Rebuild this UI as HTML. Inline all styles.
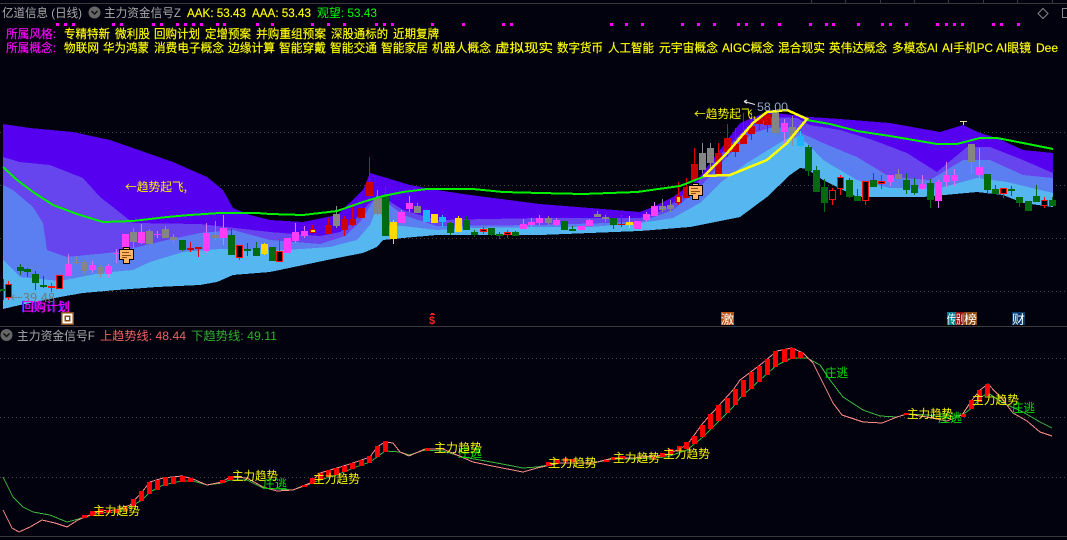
<!DOCTYPE html>
<html><head><meta charset="utf-8"><style>
html,body{margin:0;padding:0;background:#02020e;width:1067px;height:540px;overflow:hidden}
svg{display:block}
text{font-family:"Liberation Sans","Noto Sans CJK SC",sans-serif;font-size:12px}
.y{fill:#ffff00;stroke:#ffff00;stroke-width:.15}.m{fill:#ff00ff;stroke:#ff00ff;stroke-width:.15}.g{fill:#aaaaaa}.zl{fill:#f5f500}.zt{fill:#00e000}
.cj{font-family:"Noto Sans CJK SC",sans-serif}
</style></head><body>
<svg width="1067" height="540" viewBox="0 0 1067 540" xmlns="http://www.w3.org/2000/svg">
<rect width="1067" height="540" fill="#02020e"/>
<path d="M0 3.5H1067M0 326.5H1067M0 536.5H1067" stroke="#3a3a3a" fill="none"/>
<path d="M811.5 0V3M845.5 0V3M880.5 0V3M914.5 0V3M948.5 0V3M983.5 0V3M1017.5 0V3M1052.5 0V3" stroke="#3a3a3a"/>
<path d="M0 132.5H1067M0 185.5H1067M0 238.5H1067M0 291.5H1067M0 358.5H1067M0 417.5H1067M0 477.5H1067" stroke="#444" stroke-dasharray="1 3" fill="none"/>

<!-- bands -->
<g shape-rendering="crispEdges">
<polygon fill="#5500ee" points="3,124 30,128 73,132 110,140 133,148 173,162 207,177 223,190 233,208 250,215 270,220 303,222 337,215 363,190 370,173 387,178 410,185 437,190 470,195 540,204 590,208 640,212 653,207 673,197 697,180 720,150 740,123 767,112 810,117 840,119 890,123 940,132 963,125 980,133 997,138 1023,150 1053,153 1053,207 1023,203 1003,195 977,192 923,197 857,197 823,180 807,169 800,168 790,175 767,197 740,217 690,227 640,231 590,233 540,235 437,235 403,238 383,240 377,247 363,253 337,258 270,272 233,275 217,282 200,285 157,287 117,290 83,293 60,297 20,305 3,309"/>
<polygon fill="#6644ee" points="3,157 20,162 50,165 83,178 100,197 113,207 133,223 200,224 270,232 320,236 340,232 353,222 370,202 383,197 403,210 437,220 540,218 640,218 657,213 673,203 697,183 727,147 747,127 773,117 797,118 810,125 840,130 873,140 907,153 937,172 967,147 990,147 1023,160 1053,173 1053,207 1023,203 1003,195 977,192 923,197 857,197 823,180 807,169 800,168 790,175 767,197 740,217 690,227 640,231 590,233 540,235 437,235 403,238 383,240 377,247 363,253 337,258 270,272 233,275 217,282 200,285 157,287 117,290 83,293 60,297 20,305 3,309"/>
<polygon fill="#5b7ff0" points="3,185 13,190 33,207 43,223 47,250 67,257 117,252 167,240 200,233 233,230 270,240 320,244 345,236 360,222 377,195 390,205 403,215 437,226 540,225 640,222 673,210 700,187 727,157 753,133 773,127 790,128 810,137 823,143 857,157 890,177 930,180 963,160 990,160 1023,175 1053,178 1053,207 1023,203 1003,195 977,192 923,197 857,197 823,180 807,169 800,168 790,175 767,197 740,217 690,227 640,231 590,233 540,235 437,235 403,238 383,240 377,247 363,253 337,258 270,272 233,275 217,282 200,285 157,287 117,290 83,293 60,297 20,305 3,309"/>
<polygon fill="#55b6f0" points="3,260 20,277 60,281 100,273 133,270 150,262 183,252 220,249 270,250 287,250 330,247 357,240 370,225 378,205 385,225 403,226 437,230 470,228 540,227 590,227 640,223 673,218 700,203 720,183 747,163 773,147 793,135 807,143 823,160 857,180 890,188 940,188 977,178 1007,182 1053,193 1053,207 1023,203 1003,195 977,192 923,197 857,197 823,180 807,169 800,168 790,175 767,197 740,217 690,227 640,231 590,233 540,235 437,235 403,238 383,240 377,247 363,253 337,258 270,272 233,275 217,282 200,285 157,287 117,290 83,293 60,297 20,305 3,309"/>
</g>

<g shape-rendering="crispEdges">
<!-- magenta -->
<path fill="none" stroke="#d878f0" d="M68.5 254V276M92.5 261V273M108.5 264V278M116.5 249V263M125.5 234V250M141.5 224V244M157.5 231V238M206.5 223V253M223.5 215V245M287.5 238V255M295.5 223V243M304.5 226V238M401.5 210V223M409.5 196V212M523.5 219V235M531.5 218V230M539.5 215V225M556.5 218V226M581.5 226V230M589.5 219V226M637.5 221V229M646.5 212V222M654.5 202V216M784.5 119V143M890.5 175V186M922.5 175V190M938.5 180V208M946.5 162V187M954.5 169V186M979.5 148V186"/>
<path fill="#ff3cf8" d="M65 264h7V276h-7zM89 265h7V270h-7zM105 266h7V274h-7zM113 253h7V254h-7zM122 234h7V247h-7zM138 232h7V243h-7zM154 234h7V235h-7zM203 233h7V251h-7zM220 228h7V238h-7zM284 238h7V253h-7zM292 232h7V241h-7zM301 231h7V236h-7zM398 212h7V223h-7zM406 203h7V209h-7zM520 224h7V229h-7zM528 222h7V225h-7zM536 218h7V223h-7zM553 220h7V225h-7zM578 226h7V230h-7zM586 220h7V226h-7zM634 221h7V229h-7zM643 214h7V220h-7zM651 206h7V216h-7zM781 123h7V132h-7zM887 175h7V182h-7zM919 184h7V189h-7zM935 182h7V201h-7zM943 175h7V182h-7zM951 175h7V181h-7zM976 167h7V175h-7z"/>
<!-- gray -->
<path fill="none" stroke="#8e8e8e" d="M76.5 257V264M84.5 260V274M100.5 265V277M133.5 228V248M149.5 229V244M165.5 226V238M173.5 234V244M215.5 221V240M336.5 206V228M377.5 190V216M417.5 203V213M548.5 216V225M597.5 211V217M605.5 215V222M662.5 199V212M670.5 200V212M702.5 143V173M710.5 143V168M775.5 108V133M792.5 116V146M898.5 169V179M971.5 144V174"/>
<path fill="#858585" d="M73 262h7V263h-7zM81 262h7V271h-7zM97 267h7V274h-7zM130 232h7V242h-7zM146 231h7V244h-7zM162 229h7V238h-7zM170 237h7V240h-7zM212 235h7V238h-7zM333 214h7V226h-7zM374 198h7V214h-7zM414 206h7V213h-7zM545 218h7V223h-7zM594 214h7V217h-7zM602 217h7V219h-7zM659 206h7V210h-7zM667 205h7V209h-7zM699 153h7V170h-7zM707 148h7V163h-7zM772 112h7V133h-7zM789 127h7V138h-7zM895 174h7V179h-7zM968 144h7V162h-7z"/>
<!-- green -->
<path fill="none" stroke="#006e10" d="M3.5 279V300M20.5 264V275M27.5 268V277M35.5 271V290M43.5 276V288M182.5 240V251M231.5 229V255M247.5 243V256M256.5 242V256M272.5 247V261M385.5 186V236M450.5 222V235M466.5 216V230M474.5 230V237M491.5 228V236M499.5 232V239M515.5 231V236M564.5 221V230M572.5 226V231M613.5 218V229M808.5 145V176M816.5 166V192M824.5 179V212M849.5 178V198M857.5 189V201M873.5 173V187M906.5 173V194M914.5 178V195M930.5 179V208M987.5 174V194M995.5 185V194M1011.5 186V196M1019.5 197V207M1028.5 201V211M1036.5 185V202M1052.5 197V206"/>
<path fill="#006a10" d="M0 289h7V291h-7zM17 267h7V271h-7zM24 269h7V272h-7zM32 274h7V283h-7zM40 285h7V287h-7zM179 240h7V250h-7zM228 235h7V255h-7zM244 249h7V251h-7zM253 248h7V256h-7zM269 247h7V261h-7zM382 196h7V236h-7zM447 223h7V233h-7zM463 220h7V230h-7zM471 232h7V235h-7zM488 228h7V235h-7zM496 234h7V236h-7zM512 232h7V236h-7zM561 221h7V230h-7zM569 229h7V231h-7zM610 218h7V225h-7zM805 147h7V171h-7zM813 170h7V192h-7zM821 187h7V203h-7zM846 180h7V197h-7zM854 196h7V201h-7zM870 180h7V187h-7zM903 180h7V190h-7zM911 185h7V193h-7zM927 183h7V200h-7zM984 174h7V190h-7zM992 189h7V194h-7zM1008 189h7V191h-7zM1016 197h7V203h-7zM1025 201h7V211h-7zM1033 196h7V202h-7zM1049 200h7V206h-7z"/>
<!-- red solid -->
<path fill="none" stroke="#e00000" d="M190.5 242V252M198.5 247V257M328.5 218V234M344.5 216V236M352.5 204V226M361.5 206V218M369.5 157V200M621.5 215V227M686.5 178V198M694.5 148V180M718.5 143V174M727.5 124V157M735.5 128V157M743.5 113V144M751.5 112V140M759.5 118V130M767.5 112V132M312.5 225V233M678.5 182V205"/>
<path fill="#cc0000" d="M187 248h7V250h-7zM195 247h7V249h-7zM325 225h7V234h-7zM341 219h7V230h-7zM349 219h7V225h-7zM358 208h7V218h-7zM366 182h7V196h-7zM618 224h7V225h-7zM683 187h7V198h-7zM691 164h7V180h-7zM715 153h7V174h-7zM724 138h7V152h-7zM732 144h7V152h-7zM740 135h7V144h-7zM748 126h7V134h-7zM756 118h7V124h-7zM764 114h7V125h-7zM309 229h7V233h-7zM675 196h7V203h-7z"/>
<path fill="#ffd800" d="M311 230h4V232h-4zM677 197h3V202h-3z"/>
<!-- red outline -->
<path fill="none" stroke="#ff1010" d="M8.5 281V284M8.5 298V300M51.5 283V286M51.5 288V292M239.5 258V260M279.5 239V251M483.5 227V229M483.5 232V234M507.5 230V232M507.5 235V238M832.5 188V190M832.5 200V205M840.5 175V177M840.5 189V195M865.5 201V205M881.5 175V181M881.5 184V189M1003.5 194V198M1044.5 197V200M1044.5 206V208"/>
<path fill="#000" stroke="#ff1010" d="M5.5 284.5h6V297.5h-6zM48.5 286.5h6V287.5h-6zM56.5 275.5h6V288.5h-6zM236.5 245.5h6V257.5h-6zM276.5 251.5h6V261.5h-6zM480.5 229.5h6V231.5h-6zM504.5 232.5h6V234.5h-6zM829.5 190.5h6V199.5h-6zM837.5 177.5h6V188.5h-6zM862.5 181.5h6V200.5h-6zM878.5 181.5h6V183.5h-6zM1000.5 188.5h6V193.5h-6zM1041.5 200.5h6V205.5h-6z"/>
<!-- yellow -->
<path fill="none" stroke="#ffd800" d="M264.5 243V255M393.5 220V244M458.5 216V232M629.5 216V228"/>
<path fill="#ffd800" d="M261 244h7V254h-7zM390 222h7V239h-7zM431 214h7V223h-7zM455 218h7V232h-7zM626 222h7V225h-7z"/>
<path fill="none" stroke="#e8e0a0" d="M960 121.5h7M963.5 121V125"/>
<!-- cyan -->
<path fill="none" stroke="#30c0ff" d="M442.5 215V227M800.5 131V148"/>
<path fill="#1cb4ff" d="M423 210h7V222h-7zM439 217h7V222h-7zM797 136h7V146h-7z"/>
</g>

<!-- green MA -->
<g shape-rendering="crispEdges">
<polyline fill="none" stroke="#00f000" stroke-width="2" points="3,167 17,180 33,192 53,205 77,214 103,222 133,221 167,217 190,215 220,213 257,213 270,214 303,215 337,211 363,202 383,196 403,192 427,189 473,189 503,192 540,193 583,194 637,192 680,186 703,177"/>
<polyline fill="none" stroke="#00f000" stroke-width="2" points="807,120 830,124 857,131 890,136 937,144 957,144 980,138 997,138 1023,143 1053,149"/>
<!-- yellow lens -->
<polyline fill="none" stroke="#ffff00" stroke-width="2.5" points="703,177 727,153 753,123 767,112 787,110 807,119 787,143 767,160 730,175 703,176"/>
</g>

<!-- hand markers -->
<g>
<path fill="#ffb466" stroke="#000" d="M119.5 249.5h14v10h-4v4h-6v-4h-4zM123.5 247.5h6v2h-6z"/>
<path stroke="#8a4a00" d="M122 252.5h7M122 255.5h9M122 257.5h5" fill="none"/>
<path fill="#ffb466" stroke="#000" d="M688.5 185.5h14v10h-4v4h-6v-4h-4zM692.5 183.5h6v2h-6z"/>
<path stroke="#8a4a00" d="M691 188.5h7M691 191.5h9M691 193.5h5" fill="none"/>
</g>

<!-- main chart labels -->
<text x="125" y="191" class="zl cj" textLength="62" lengthAdjust="spacingAndGlyphs">←趋势起飞,</text>
<text x="694" y="118" class="zl cj" textLength="62" lengthAdjust="spacingAndGlyphs">←趋势起飞,</text>
<path d="M744 101.5l3-1.5M744 101.5l3 2M744 101.5l11 3" stroke="#e8e8e8" fill="none"/>
<text x="757" y="111" fill="#8fa8c0" textLength="31" lengthAdjust="spacingAndGlyphs">58.00</text>
<text x="10" y="302" fill="#777" class="cj" textLength="45" lengthAdjust="spacingAndGlyphs">←39.48</text>
<text x="21" y="311" fill="#2020ff" textLength="48" lengthAdjust="spacingAndGlyphs">回购计划</text>
<text x="22" y="311" class="m" textLength="48" lengthAdjust="spacingAndGlyphs">回购计划</text>

<!-- event tags -->
<rect x="61" y="312" width="13" height="13" fill="#8b4a10"/><rect x="63.5" y="314.5" width="8" height="8" fill="none" stroke="#fff" stroke-width="2"/><rect x="66" y="317" width="3" height="3" fill="#fff"/>
<text x="432" y="324" fill="#ff2020" font-weight="bold" text-anchor="middle" style="font-size:11px">$</text>
<path d="M430 314.5h5M431 313.5h3" stroke="#ff2020" fill="none"/>
<rect x="721" y="312" width="13" height="13" fill="#c05010"/>
<text x="721" y="323.500" fill="#fff" textLength="13" lengthAdjust="spacingAndGlyphs">激</text>
<rect x="947" y="312" width="9" height="13" fill="#007f8f"/><rect x="956" y="312" width="8" height="13" fill="#8a1010"/><rect x="964" y="312" width="13" height="13" fill="#8b4a10"/>
<text x="947" y="323.500" fill="#fff" textLength="9" lengthAdjust="spacingAndGlyphs">传</text>
<text x="956" y="323.500" fill="#fff" textLength="8" lengthAdjust="spacingAndGlyphs">别</text>
<text x="964" y="323.500" fill="#fff" textLength="13" lengthAdjust="spacingAndGlyphs">榜</text>
<rect x="1012" y="312" width="13" height="13" fill="#0a3a6a"/>
<text x="1012" y="323.500" fill="#fff" textLength="13" lengthAdjust="spacingAndGlyphs">财</text>

<!-- header -->
<text x="2" y="17" class="g" textLength="80" lengthAdjust="spacingAndGlyphs">亿道信息 (日线)</text>
<circle cx="94.500" cy="12.500" r="6" fill="#666"/><path d="M91.500 11l3 3 3-3" stroke="#111" stroke-width="1.500" fill="none"/>
<text x="104" y="17" class="g" textLength="77" lengthAdjust="spacingAndGlyphs">主力资金信号Z</text>
<text x="187" y="17" class="y" textLength="59" lengthAdjust="spacingAndGlyphs">AAK: 53.43</text>
<text x="252" y="17" class="y" textLength="59" lengthAdjust="spacingAndGlyphs">AAA: 53.43</text>
<text x="317" y="17" fill="#00ff00" textLength="60" lengthAdjust="spacingAndGlyphs">观望: 53.43</text>
<path d="M1043 8.500l5 5-5 5-5-5z" stroke="#888" fill="none"/><rect x="1062.500" y="8.500" width="5" height="9" stroke="#888" fill="none"/>

<!-- magenta dots -->
<path fill="#ff00ff" d="M56 23h3v3h-3zM64 23h3v3h-3zM72 23h3v3h-3zM112 23h3v3h-3zM120 23h3v3h-3zM152 23h3v3h-3zM160 23h3v3h-3zM176 23h3v3h-3zM184 23h3v3h-3zM192 23h3v3h-3zM200 23h3v3h-3zM216 23h3v3h-3zM223 23h3v3h-3zM256 23h3v3h-3zM271 23h3v3h-3zM311 23h3v3h-3zM327 23h3v3h-3zM343 23h3v3h-3zM375 23h3v3h-3zM383 23h3v3h-3zM391 23h3v3h-3zM431 23h3v3h-3zM462 23h3v3h-3zM502 23h3v3h-3zM510 23h3v3h-3zM610 23h3v3h-3zM625 23h3v3h-3zM641 23h3v3h-3zM681 23h3v3h-3zM697 23h3v3h-3zM713 23h3v3h-3zM737 23h3v3h-3zM745 23h3v3h-3zM761 23h3v3h-3zM778 23h3v3h-3zM809 23h3v3h-3zM825 23h3v3h-3zM832 23h3v3h-3zM857 23h3v3h-3zM881 23h3v3h-3zM889 23h3v3h-3zM905 23h3v3h-3zM936 23h3v3h-3zM945 23h3v3h-3zM953 23h3v3h-3zM961 23h3v3h-3zM992 23h3v3h-3zM1000 23h3v3h-3zM1017 23h3v3h-3z"/>

<!-- info rows -->
<text x="6" y="38" class="m" textLength="50" lengthAdjust="spacingAndGlyphs">所属风格:</text>
<text x="64" y="38" class="y" textLength="46" lengthAdjust="spacingAndGlyphs">专精特新</text>
<text x="115" y="38" class="y" textLength="35" lengthAdjust="spacingAndGlyphs">微利股</text>
<text x="154" y="38" class="y" textLength="46" lengthAdjust="spacingAndGlyphs">回购计划</text>
<text x="205" y="38" class="y" textLength="46" lengthAdjust="spacingAndGlyphs">定增预案</text>
<text x="256" y="38" class="y" textLength="70" lengthAdjust="spacingAndGlyphs">并购重组预案</text>
<text x="331" y="38" class="y" textLength="57" lengthAdjust="spacingAndGlyphs">深股通标的</text>
<text x="393" y="38" class="y" textLength="46" lengthAdjust="spacingAndGlyphs">近期复牌</text>
<text x="6" y="52" class="m" textLength="50" lengthAdjust="spacingAndGlyphs">所属概念:</text>
<text x="64" y="52" class="y" textLength="35" lengthAdjust="spacingAndGlyphs">物联网</text>
<text x="103" y="52" class="y" textLength="46" lengthAdjust="spacingAndGlyphs">华为鸿蒙</text>
<text x="154" y="52" class="y" textLength="70" lengthAdjust="spacingAndGlyphs">消费电子概念</text>
<text x="228" y="52" class="y" textLength="47" lengthAdjust="spacingAndGlyphs">边缘计算</text>
<text x="279" y="52" class="y" textLength="47" lengthAdjust="spacingAndGlyphs">智能穿戴</text>
<text x="330" y="52" class="y" textLength="47" lengthAdjust="spacingAndGlyphs">智能交通</text>
<text x="381" y="52" class="y" textLength="47" lengthAdjust="spacingAndGlyphs">智能家居</text>
<text x="432" y="52" class="y" textLength="59" lengthAdjust="spacingAndGlyphs">机器人概念</text>
<text x="495" y="52" class="y" textLength="58" lengthAdjust="spacingAndGlyphs">虚拟现实</text>
<text x="557" y="52" class="y" textLength="46" lengthAdjust="spacingAndGlyphs">数字货币</text>
<text x="608" y="52" class="y" textLength="46" lengthAdjust="spacingAndGlyphs">人工智能</text>
<text x="659" y="52" class="y" textLength="59" lengthAdjust="spacingAndGlyphs">元宇宙概念</text>
<text x="722" y="52" class="y" textLength="52" lengthAdjust="spacingAndGlyphs">AIGC概念</text>
<text x="778" y="52" class="y" textLength="47" lengthAdjust="spacingAndGlyphs">混合现实</text>
<text x="829" y="52" class="y" textLength="58" lengthAdjust="spacingAndGlyphs">英伟达概念</text>
<text x="892" y="52" class="y" textLength="46" lengthAdjust="spacingAndGlyphs">多模态AI</text>
<text x="942" y="52" class="y" textLength="51" lengthAdjust="spacingAndGlyphs">AI手机PC</text>
<text x="996" y="52" class="y" textLength="35" lengthAdjust="spacingAndGlyphs">AI眼镜</text>
<text x="1036" y="52" class="y">Dee</text>

<!-- lower panel header -->
<circle cx="6.500" cy="335" r="6" fill="#666"/><path d="M3.500 333.500l3 3 3-3" stroke="#111" stroke-width="1.500" fill="none"/>
<text x="17" y="340" class="g" textLength="78" lengthAdjust="spacingAndGlyphs">主力资金信号F</text>
<text x="100" y="340" fill="#f06060" textLength="86" lengthAdjust="spacingAndGlyphs">上趋势线: 48.44</text>
<text x="191" y="340" fill="#30b030" textLength="86" lengthAdjust="spacingAndGlyphs">下趋势线: 49.11</text>

<!-- lower lines -->
<g shape-rendering="crispEdges">
<polyline fill="none" stroke="#3cb440" points="3,477 13,497 23,507 33,512 50,515 67,522 75,520 85,517 100,513 117,512 130,507 142,500 150,492 163,485 182,481 193,481 207,485 222,483 230,480 247,480 263,488 277,489 293,490 310,484 320,480 337,475 353,468 370,462 377,457 385,451 400,452 409,455 425,450 443,451 463,457 497,463 523,468 537,467 560,463 593,463 613,459 633,459 667,457 687,450 703,437 733,407 740,398 760,380 777,365 792,358 807,358 820,365 830,380 843,397 863,410 880,416 897,417 907,414 927,415 947,417 962,415 972,408 980,398 988,393 1003,403 1023,412 1040,422 1052,428"/>
<polyline fill="none" stroke="#ff8c8c" points="3,510 12,528 19,532 30,527 42,520 55,523 67,527 78,520 85,517 100,511 117,510 130,505 142,492 150,482 163,478 182,476 193,479 207,485 222,482 230,477 247,478 263,487 277,491 293,490 310,483 320,473 337,468 353,463 370,457 377,447 385,442 393,443 400,452 409,456 425,449 443,449 457,455 473,462 497,467 523,472 537,468 560,463 593,463 613,458 633,458 667,455 687,445 703,423 733,390 740,380 760,365 777,351 792,348 803,353 813,363 823,383 833,403 842,415 863,422 882,423 897,417 907,414 927,417 947,421 962,415 972,400 980,390 988,384 1003,400 1013,413 1027,421 1040,432 1052,436"/>
</g>
<!-- red bars -->
<path fill="#ff0000" shape-rendering="crispEdges" d="M82 515h5V518h-5zM90 511h5V516h-5zM98 509h5V514h-5zM106 510h5V513h-5zM114 509h5V513h-5zM123 507h5V511h-5zM131 499h5V506h-5zM139 491h5V501h-5zM147 482h5V494h-5zM155 480h5V490h-5zM163 477h5V486h-5zM171 477h5V484h-5zM180 476h5V482h-5zM188 478h5V482h-5zM220 480h5V483h-5zM228 476h5V480h-5zM302 485h5V487h-5zM310 478h5V484h-5zM318 473h5V480h-5zM326 470h5V477h-5zM334 468h5V475h-5zM342 466h5V472h-5zM350 463h5V469h-5zM359 460h5V466h-5zM367 456h5V463h-5zM375 446h5V457h-5zM383 441h5V452h-5zM425 448h5V451h-5zM546 462h5V466h-5zM555 459h5V464h-5zM563 458h5V462h-5zM570 459h5V462h-5zM604 460h5V462h-5zM611 457h5V460h-5zM620 456h5V459h-5zM651 457h5V459h-5zM660 453h5V457h-5zM668 449h5V454h-5zM677 446h5V451h-5zM684 442h5V449h-5zM692 436h5V444h-5zM700 425h5V437h-5zM708 414h5V429h-5zM716 405h5V421h-5zM725 398h5V413h-5zM733 389h5V405h-5zM741 380h5V397h-5zM749 372h5V389h-5zM757 366h5V382h-5zM765 359h5V375h-5zM773 351h5V367h-5zM782 349h5V362h-5zM790 348h5V359h-5zM798 352h5V358h-5zM904 413h5V415h-5zM961 414h5V417h-5zM969 400h5V409h-5zM977 390h5V402h-5zM985 384h5V396h-5z"/>
<!-- lower labels -->
<text x="93" y="515" class="zl" textLength="47" lengthAdjust="spacingAndGlyphs">主力趋势</text>
<text x="232" y="480" class="zl" textLength="46" lengthAdjust="spacingAndGlyphs">主力趋势</text>
<text x="313" y="483" class="zl" textLength="47" lengthAdjust="spacingAndGlyphs">主力趋势</text>
<text x="263" y="488" class="zt" textLength="24" lengthAdjust="spacingAndGlyphs">庄逃</text>
<text x="458" y="457" class="zt" textLength="24" lengthAdjust="spacingAndGlyphs">庄逃</text>
<text x="434" y="452" class="zl" textLength="48" lengthAdjust="spacingAndGlyphs">主力趋势</text>
<text x="548" y="467" class="zl" textLength="49" lengthAdjust="spacingAndGlyphs">主力趋势</text>
<text x="613" y="462" class="zl" textLength="47" lengthAdjust="spacingAndGlyphs">主力趋势</text>
<text x="663" y="458" class="zl" textLength="47" lengthAdjust="spacingAndGlyphs">主力趋势</text>
<text x="825" y="377" class="zt" textLength="23" lengthAdjust="spacingAndGlyphs">庄逃</text>
<text x="938" y="422" class="zt" textLength="24" lengthAdjust="spacingAndGlyphs">庄逃</text>
<text x="907" y="418" class="zl" textLength="46" lengthAdjust="spacingAndGlyphs">主力趋势</text>
<text x="972" y="404" class="zl" textLength="47" lengthAdjust="spacingAndGlyphs">主力趋势</text>
<text x="1012" y="412" class="zt" textLength="23" lengthAdjust="spacingAndGlyphs">庄逃</text>
</svg>
</body></html>
